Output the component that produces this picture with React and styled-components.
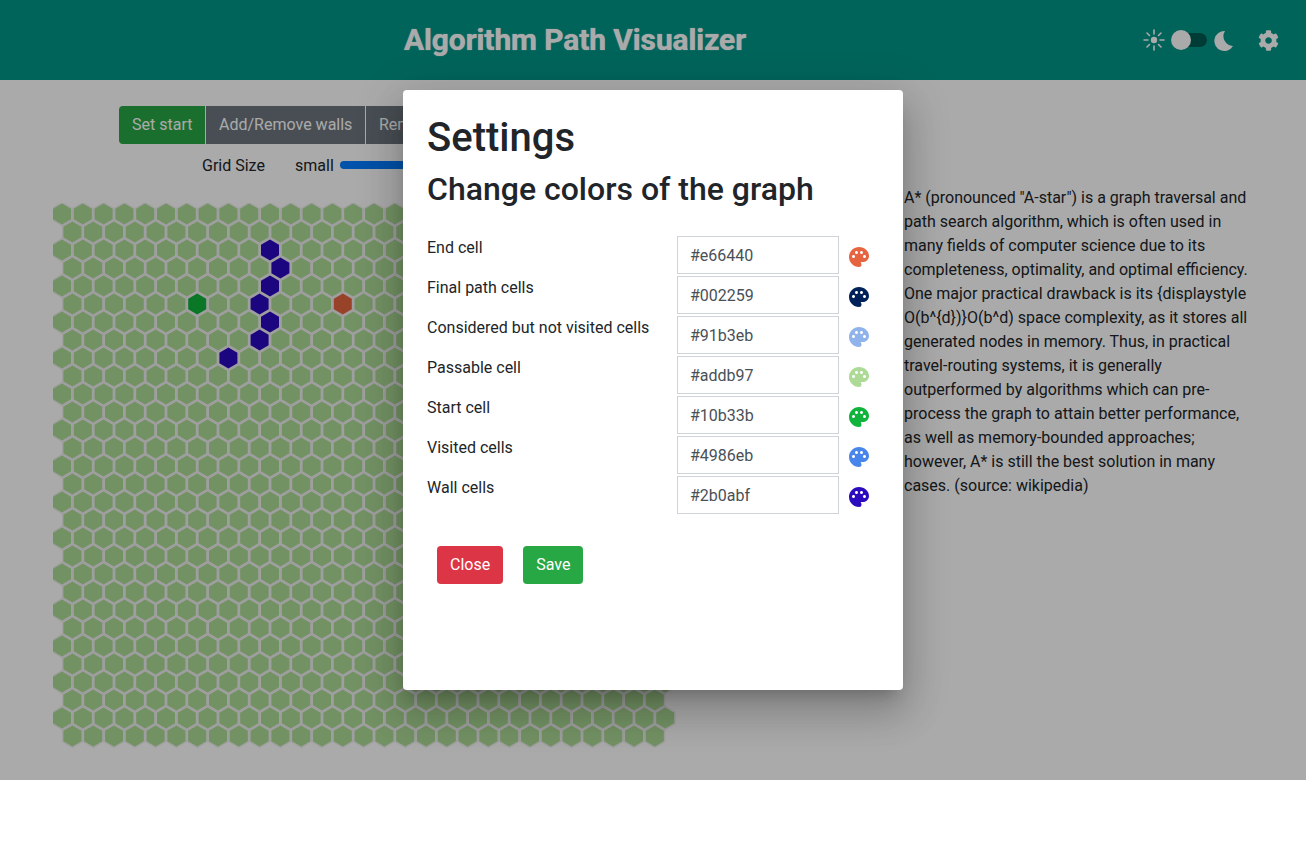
import styled, { createGlobalStyle } from "styled-components";
import { FaCog } from "react-icons/fa";
import { MdPalette } from "react-icons/md";

const GlobalStyle = createGlobalStyle`
  body {
    margin: 0;
    background: #fff;
    color: #212529;
    font-family: Roboto, "Liberation Sans", sans-serif;
    font-size: 16px;
    line-height: 24px;
  }
`;

const Page = styled.div`
  position: relative;
  height: 780px;
  overflow: hidden;
`;

const Header = styled.header`
  height: 80px;
  background: #009688;
  display: flex;
  align-items: center;
  color: #fff;
`;

const AppTitle = styled.h1`
  width: 1150px;
  margin: 0;
  text-align: center;
  font-size: 30px;
  font-weight: 700;
  line-height: 80px;
  letter-spacing: -0.12px;
  text-shadow: 0 0 1px #fff;
`;

const ThemeSwitch = styled.div`
  display: flex;
  align-items: center;
  margin-left: -8px;
`;

const Toggle = styled.div`
  position: relative;
  width: 36px;
  height: 14px;
  margin: 0 6px 0 5px;
  border-radius: 7px;
  background: rgba(0, 0, 0, 0.4);
`;

const Knob = styled.span`
  position: absolute;
  left: 0;
  top: -3px;
  width: 20px;
  height: 20px;
  border-radius: 50%;
  background: #fff;
`;

const SettingsIcon = styled(FaCog)`
  margin-left: 23px;
  font-size: 21px;
`;

const Body = styled.main`
  display: flex;
`;

const LeftColumn = styled.section`
  width: 851px;
  padding: 26px 0 0 53px;
`;

const Toolbar = styled.div`
  display: flex;
  margin-left: 66px;
`;

const ToolButton = styled.button`
  height: 38px;
  padding: ${(p) => (p.$first ? "0 13px" : "0 13px 0 12.6px")};
  border: 0;
  border-left: ${(p) => (p.$first ? "0" : "1px solid #fff")};
  border-radius: ${(p) => (p.$first ? "4px 0 0 4px" : "0")};
  background: ${(p) => (p.$active ? "#28a745" : "#6c757d")};
  color: #fff;
  font: inherit;
`;

const SizeRow = styled.div`
  display: flex;
  align-items: center;
  height: 24px;
  margin: 10px 0 0 149px;
`;

const SizeLabel = styled.span`
  width: 93px;
`;

const SliderLabel = styled.span`
  margin-right: 6px;
`;

const SliderTrack = styled.div`
  width: 300px;
  height: 8px;
  margin-bottom: 3px;
  border-radius: 4px;
  background: #007bff;
`;

const GridDrawing = styled.svg`
  display: block;
  margin-top: 25px;
`;

const Description = styled.p`
  width: 346px;
  margin: 106px 0 0;
`;

const Backdrop = styled.div`
  position: absolute;
  inset: 0;
  background: rgba(0, 0, 0, 0.333);
`;

const Modal = styled.div`
  position: absolute;
  left: 403px;
  top: 90px;
  width: 500px;
  height: 600px;
  box-sizing: border-box;
  padding: 24px;
  border-radius: 4px;
  background: #fff;
  box-shadow: 0 11px 15px -7px rgba(0, 0, 0, 0.2),
    0 24px 38px 3px rgba(0, 0, 0, 0.14), 0 9px 46px 8px rgba(0, 0, 0, 0.12);
`;

const ModalTitle = styled.h2`
  margin: 0;
  font-size: 40px;
  font-weight: 500;
  line-height: 48px;
`;

const ModalSubtitle = styled.h3`
  margin: 8px 0 28px;
  font-size: 32px;
  font-weight: 500;
  line-height: 38px;
`;

const ColorRow = styled.div`
  display: flex;
  height: 40px;
`;

const ColorLabel = styled.label`
  width: 250px;
`;

const ColorInput = styled.input`
  width: 162px;
  height: 38px;
  box-sizing: border-box;
  padding: 6px 12px;
  border: 1px solid #ced4da;
  border-radius: 0;
  color: #495057;
  font: inherit;
`;

const PaletteIcon = styled(MdPalette)`
  margin: 9px 0 0 8px;
  font-size: 24px;
  color: ${(p) => p.$color};
`;

const Actions = styled.div`
  display: flex;
  gap: 20px;
  margin: 30px 0 0 10px;
`;

const ActionButton = styled.button`
  height: 38px;
  padding: 0 13px;
  border: 0;
  border-radius: 4px;
  background: ${(p) => p.$bg};
  color: #fff;
  font: inherit;
`;

const COLORS = [
  ["End cell", "#e66440"],
  ["Final path cells", "#002259"],
  ["Considered but not visited cells", "#91b3eb"],
  ["Passable cell", "#addb97"],
  ["Start cell", "#10b33b"],
  ["Visited cells", "#4986eb"],
  ["Wall cells", "#2b0abf"],
];

const WALLS = ["2-10", "3-10", "4-10", "5-9", "6-10", "7-9", "8-8"];
const HEX_R = 10.4;
const COL_STEP = 20.8;
const ROW_STEP = 18;

function hexPoints(cx, cy) {
  const pts = [];
  for (let i = 0; i < 6; i++) {
    const a = (Math.PI / 3) * i + Math.PI / 6;
    pts.push(`${(cx + HEX_R * Math.cos(a)).toFixed(2)},${(cy + HEX_R * Math.sin(a)).toFixed(2)}`);
  }
  return pts.join(" ");
}

function cellColor(row, col) {
  const key = `${row}-${col}`;
  if (key === "5-6") return "#10b33b";
  if (key === "5-13") return "#e66440";
  if (WALLS.includes(key)) return "#2b0abf";
  return "#addb97";
}

function HexGrid() {
  const cells = [];
  for (let row = 0; row < 30; row++) {
    const odd = row % 2 === 1;
    const count = odd ? 29 : 30;
    for (let col = 0; col < count; col++) {
      const cx = 9 + (odd ? 10.4 : 0) + col * COL_STEP;
      const cy = 11 + row * ROW_STEP;
      cells.push(
        <polygon
          key={`${row}-${col}`}
          points={hexPoints(cx, cy)}
          fill={cellColor(row, col)}
          stroke="rgba(0,0,0,0.06)"
          strokeWidth="3"
          paintOrder="stroke"
        />
      );
    }
  }
  return (
    <GridDrawing width="624" height="546" viewBox="0 0 624 546">
      {cells}
    </GridDrawing>
  );
}

function SunIcon() {
  return (
    <svg width="24" height="24" viewBox="0 0 24 24" fill="none" stroke="currentColor" strokeWidth="1.6" strokeLinecap="round">
      <circle cx="12" cy="12" r="3.2" fill="currentColor" stroke="none" />
      <path d="M12 2v4M12 18v4M2 12h4M18 12h4M5 5l2.5 2.5M16.5 16.5L19 19M19 5l-2.5 2.5M7.5 16.5L5 19" />
    </svg>
  );
}

function MoonIcon() {
  return (
    <svg width="22" height="24" viewBox="0 0 22 24" fill="currentColor">
      <path d="M12 3A10 10 0 1 0 20 18A9.8 9.8 0 0 1 12 3z" />
    </svg>
  );
}

export default function App() {
  return (
    <Page>
      <GlobalStyle />
      <Header>
        <AppTitle>Algorithm Path Visualizer</AppTitle>
        <ThemeSwitch>
          <SunIcon />
          <Toggle>
            <Knob />
          </Toggle>
          <MoonIcon />
        </ThemeSwitch>
        <SettingsIcon />
      </Header>
      <Body>
        <LeftColumn>
          <Toolbar>
            <ToolButton $first $active>Set start</ToolButton>
            <ToolButton>Add/Remove walls</ToolButton>
            <ToolButton>Remove walls</ToolButton>
          </Toolbar>
          <SizeRow>
            <SizeLabel>Grid Size</SizeLabel>
            <SliderLabel>small</SliderLabel>
            <SliderTrack />
          </SizeRow>
          <HexGrid />
        </LeftColumn>
        <Description>
          A* (pronounced "A-star") is a graph traversal and path search algorithm, which is often
          used in many fields of computer science due to its completeness, optimality, and optimal
          efficiency. One major practical drawback is its {"{displaystyle O(b^{d})}"}O(b^d) space
          complexity, as it stores all generated nodes in memory. Thus, in practical travel-routing
          systems, it is generally outperformed by algorithms which can pre-process the graph to
          attain better performance, as well as memory-bounded approaches; however, A* is still the
          best solution in many cases. (source: wikipedia)
        </Description>
      </Body>
      <Backdrop />
      <Modal>
        <ModalTitle>Settings</ModalTitle>
        <ModalSubtitle>Change colors of the graph</ModalSubtitle>
        {COLORS.map(([label, color]) => (
          <ColorRow key={label}>
            <ColorLabel>{label}</ColorLabel>
            <ColorInput defaultValue={color} />
            <PaletteIcon $color={color} />
          </ColorRow>
        ))}
        <Actions>
          <ActionButton $bg="#dc3545">Close</ActionButton>
          <ActionButton $bg="#28a745">Save</ActionButton>
        </Actions>
      </Modal>
    </Page>
  );
}
